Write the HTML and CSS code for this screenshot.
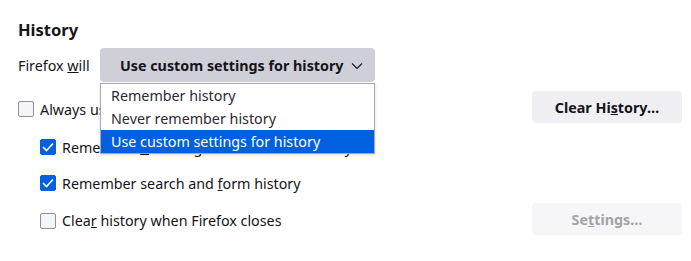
FILE: index.html
```html
<!DOCTYPE html>
<html lang="en">
<head>
    <meta charset="UTF-8">
    <title>History</title>
    <link rel="stylesheet" href="styles.css">
</head>
<body>
    <section class="history">
        <h2 class="heading">History</h2>

        <div class="mode-row">
            <label class="mode-label">Firefox <span class="key">w</span>ill</label>
            <div class="menulist">
                <span>Use custom settings for history</span>
                <svg class="chevron" width="12" height="8" viewBox="0 0 12 8">
                    <path d="M1 1.5 L6 6.5 L11 1.5" fill="none" stroke="#15141a" stroke-width="1.1"/>
                </svg>
            </div>
            <!-- open dropdown -->
            <ul class="popup">
                <li>Remember history</li>
                <li>Never remember history</li>
                <li class="selected">Use custom settings for history</li>
            </ul>
        </div>

        <div class="option-row first">
            <label class="check"><span class="box"></span><span>Always use private browsing mode</span></label>
            <button class="btn">Clear Hi<span class="key">s</span>tory…</button>
        </div>

        <div class="nested">
            <div class="option-row">
                <label class="check"><span class="box on"></span><span>Remember <span class="key">b</span>rowsing and download history</span></label>
            </div>
            <div class="option-row">
                <label class="check"><span class="box on"></span><span>Remember search and <span class="key">f</span>orm history</span></label>
            </div>
            <div class="option-row last">
                <label class="check"><span class="box"></span><span>Clea<span class="key">r</span> history when Firefox closes</span></label>
                <button class="btn" disabled>Se<span class="key">t</span>tings…</button>
            </div>
        </div>
    </section>
</body>
</html>
```

FILE: styles.css
```css
* {
    box-sizing: border-box;
    margin: 0;
    padding: 0;
}

body {
    font-family: "Noto Sans", "Open Sans", sans-serif;
    font-size: 14.3px;
    color: #15141a;
    background-color: #ffffff;
}

.history {
    padding: 19px 9px 0 18px;
}

.heading {
    font-size: 16.5px;
    font-weight: bold;
    line-height: 22px;
    margin-bottom: 7px;
}

.key {
    text-decoration: underline;
}

.mode-row {
    position: relative;
    display: flex;
    align-items: center;
    gap: 8px;
}

.mode-label {
    width: 74px;
    white-space: nowrap;
}

.menulist {
    display: flex;
    align-items: center;
    gap: 7px;
    width: 275px;
    height: 34px;
    padding: 0 0 0 20px;
    background-color: #cfcfd8;
    border-radius: 4px;
    font-weight: bold;
    white-space: nowrap;
}

.chevron {
    margin-top: 1px;
}

.popup {
    position: absolute;
    top: 35px;
    left: 82px;
    width: 275px;
    list-style: none;
    background-color: #ffffff;
    border: 1px solid #a8a8b0;
    box-shadow: 0 1px 3px rgba(0, 0, 0, 0.15);
    z-index: 2;
}

.popup li {
    height: 23px;
    line-height: 24px;
    padding-left: 10px;
    color: #2b2a33;
}

.popup li.selected {
    background-color: #0060df;
    color: #ffffff;
}

.option-row {
    display: flex;
    align-items: center;
    justify-content: space-between;
    height: 36px;
}

.option-row.first {
    margin-top: 9px;
    height: 32px;
}

.option-row.first .check {
    padding-top: 4px;
}

.option-row.last .check {
    padding-top: 3px;
}

.nested {
    padding-left: 22px;
    padding-top: 6px;
}

.check {
    display: flex;
    align-items: center;
    gap: 6px;
    white-space: nowrap;
}

.box {
    width: 16px;
    height: 16px;
    border: 1px solid #8f8f9d;
    border-radius: 2px;
    background-color: #f5f5f7;
    flex-shrink: 0;
}

.box.on {
    border-color: #0060df;
    background-color: #0060df;
    background-image: url("data:image/svg+xml;utf8,<svg xmlns='http://www.w3.org/2000/svg' width='16' height='16' viewBox='0 0 16 16'><path d='M3 8 L6.5 11.5 L13 4.5' fill='none' stroke='white' stroke-width='1.6'/></svg>");
    background-position: -1px -1px;
}

.btn {
    width: 150px;
    height: 32px;
    border: none;
    border-radius: 4px;
    background-color: #f0f0f4;
    font-family: inherit;
    font-size: 14.3px;
    font-weight: bold;
    color: #15141a;
}

.btn:disabled {
    background-color: #f6f6f8;
    color: #a3a3aa;
}
```
